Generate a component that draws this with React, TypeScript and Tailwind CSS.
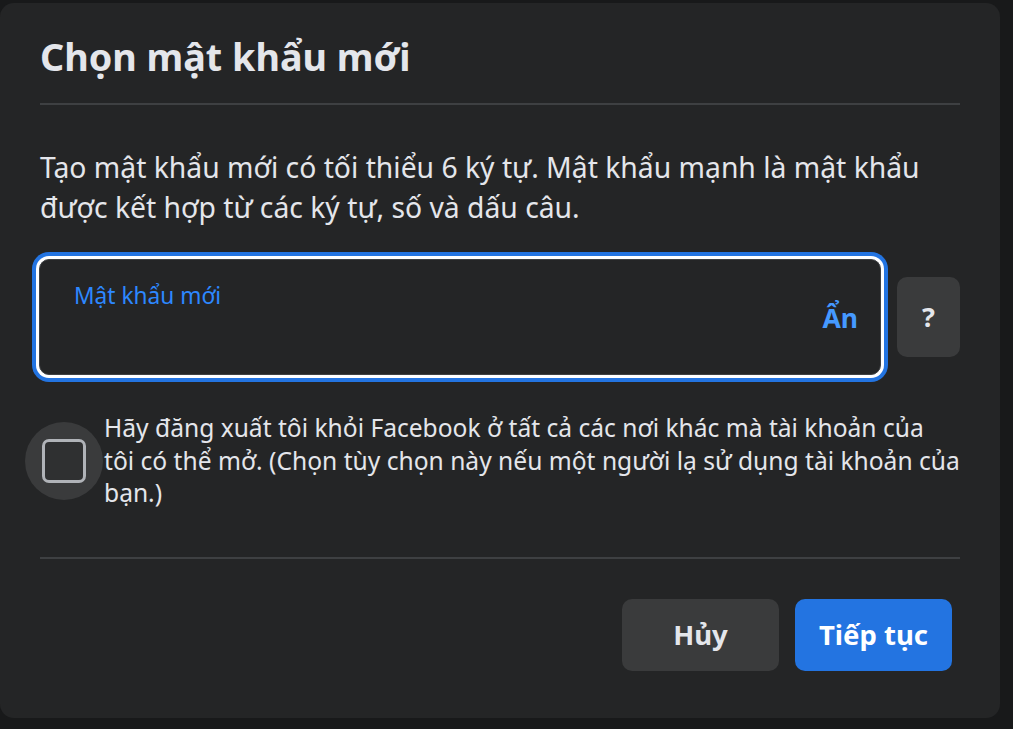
import React from "react";

export default function App() {
  return (
    <div
      className="w-[1013px] h-[729px] bg-[#18191a] pt-[3px] overflow-hidden"
      style={{ fontFamily: '"Noto Sans", "Open Sans", sans-serif' }}
    >
      <div className="w-[1000px] h-[715px] bg-[#242526] rounded-[14px] px-[40px] pt-[32px] flex flex-col">
        <h1 className="text-[37.7px] leading-[44px] font-bold text-[#e4e6eb] m-0">
          Chọn mật khẩu mới
        </h1>
        <div className="mt-[24px] h-[2px] bg-[#3e4042]" />
        <p className="mt-[42px] text-[28.3px] leading-[40px] text-[#e4e6eb] whitespace-nowrap">
          Tạo mật khẩu mới có tối thiểu 6 ký tự. Mật khẩu mạnh là mật khẩu
          <br />
          được kết hợp từ các ký tự, số và dấu câu.
        </p>
        <div className="mt-[32px] flex items-center">
          <div className="w-[843px] h-[116px] -ml-[1px] rounded-[10px] border border-[#3e4042] bg-[#242526] shadow-[0_0_0_3px_#ffffff,0_0_0_7px_#2374e1] flex items-center justify-between pl-[34px] pr-[22px] relative">
            <span className="absolute left-[34px] top-[21px] text-[22.7px] leading-[30px] text-[#2d88ff]">
              Mật khẩu mới
            </span>
            <span />
            <span className="mt-[4px] text-[26.5px] font-bold text-[#4599ff]">Ẩn</span>
          </div>
          <div className="ml-[16px] w-[63px] h-[80px] rounded-[10px] bg-[#3a3b3c] flex items-center justify-center text-[27px] font-bold text-[#e4e6eb]">
            ?
          </div>
        </div>
        <div className="mt-[37px] flex items-center">
          <div className="-ml-[15px] w-[78px] h-[78px] shrink-0 rounded-full bg-[#3a3b3c] flex items-center justify-center">
            <div className="w-[44px] h-[44px] rounded-[7px] border-[3px] border-[#b0b3b8] bg-[#2f3031]" />
          </div>
          <p className="ml-[1px] text-[24.6px] leading-[32.5px] text-[#e4e6eb] whitespace-nowrap">
            Hãy đăng xuất tôi khỏi Facebook ở tất cả các nơi khác mà tài khoản của
            <br />
            tôi có thể mở. (Chọn tùy chọn này nếu một người lạ sử dụng tài khoản của
            <br />
            bạn.)
          </p>
        </div>
        <div className="mt-[47px] h-[2px] bg-[#3e4042]" />
        <div className="mt-[40px] flex justify-end gap-[16px] pr-[8px]">
          <button className="w-[157px] h-[72px] rounded-[10px] bg-[#3a3b3c] text-[27.5px] font-bold text-[#e4e6eb]">
            Hủy
          </button>
          <button className="w-[157px] h-[72px] rounded-[10px] bg-[#2374e1] text-[27.5px] font-bold text-white">
            Tiếp tục
          </button>
        </div>
      </div>
    </div>
  );
}
